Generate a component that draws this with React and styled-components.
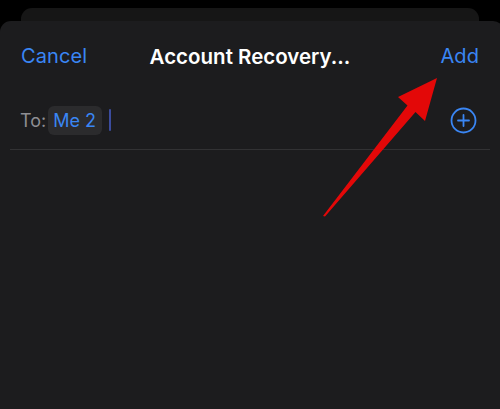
import React from "react"
import styled, { createGlobalStyle } from "styled-components"

const GlobalStyle = createGlobalStyle`
  html, body {
    margin: 0;
    padding: 0;
    background: #000;
    font-family: Inter, "Noto Sans", "Liberation Sans", sans-serif;
  }
  #root {
    height: 409px;
    overflow: hidden;
  }
`

const Page = styled.div`
  position: relative;
  height: 409px;
  padding-top: 8px;
  box-sizing: border-box;
  overflow: hidden;
`

const BackCard = styled.div`
  margin: 0 21px;
  height: 13px;
  background: #161616;
  border-radius: 11px 11px 0 0;
`

const Sheet = styled.div`
  width: 504px;
  height: 400px;
  background: #1c1c1e;
  border-radius: 11px 11px 0 0;
`

const Header = styled.div`
  height: 70px;
  padding: 0 21px;
  width: 500px;
  box-sizing: border-box;
  display: grid;
  grid-template-columns: 1fr auto 1fr;
  align-items: center;
`

const NavButton = styled.span`
  color: #3a86f4;
  font-size: 20px;
  letter-spacing: 0.1px;
  justify-self: ${(p) => (p.$end ? "end" : "start")};
`

const Title = styled.span`
  color: #fff;
  font-size: 20.5px;
  font-weight: 600;
`

const ToRow = styled.div`
  width: 480px;
  margin-left: 10px;
  height: 59px;
  box-sizing: border-box;
  padding: 0 13px 0 10px;
  display: flex;
  align-items: center;
  border-bottom: 1px solid #323234;
`

const ToLabel = styled.span`
  color: #8e8e93;
  font-size: 18px;
  margin-right: 2px;
`

const Chip = styled.span`
  background: #2b2b2d;
  color: #3a86f4;
  font-size: 18px;
  border-radius: 6px;
  padding: 4px 6px 4px 5px;
  line-height: 21px;
`

const Caret = styled.span`
  width: 2px;
  height: 22px;
  margin-left: 7px;
  background: #3b4c9e;
  border-radius: 1px;
`

const PlusButton = styled.svg`
  margin-left: auto;
  width: 27px;
  height: 27px;
`

const Annotation = styled.svg`
  position: absolute;
  inset: 0;
  width: 500px;
  height: 409px;
  pointer-events: none;
`

export default function App() {
  return (
    <>
      <GlobalStyle />
      <Page>
        <BackCard />
        <Sheet>
          <Header>
            <NavButton>Cancel</NavButton>
            <Title>Account Recovery...</Title>
            <NavButton $end>Add</NavButton>
          </Header>
          <ToRow>
            <ToLabel>To:</ToLabel>
            <Chip>Me 2</Chip>
            <Caret />
            <PlusButton viewBox="0 0 27 27" fill="none" stroke="#3a86f4" strokeWidth="1.8" strokeLinecap="round">
              <circle cx="13.5" cy="13.5" r="12" />
              <path d="M13.5 8v11M8 13.5h11" />
            </PlusButton>
          </ToRow>
        </Sheet>
        <Annotation viewBox="0 0 500 409">
          <polygon
            fill="#e30808"
            points="437,78 398,97 407.5,105.5 323,216 325,216.5 415.5,112 425,121"
          />
        </Annotation>
      </Page>
    </>
  )
}
